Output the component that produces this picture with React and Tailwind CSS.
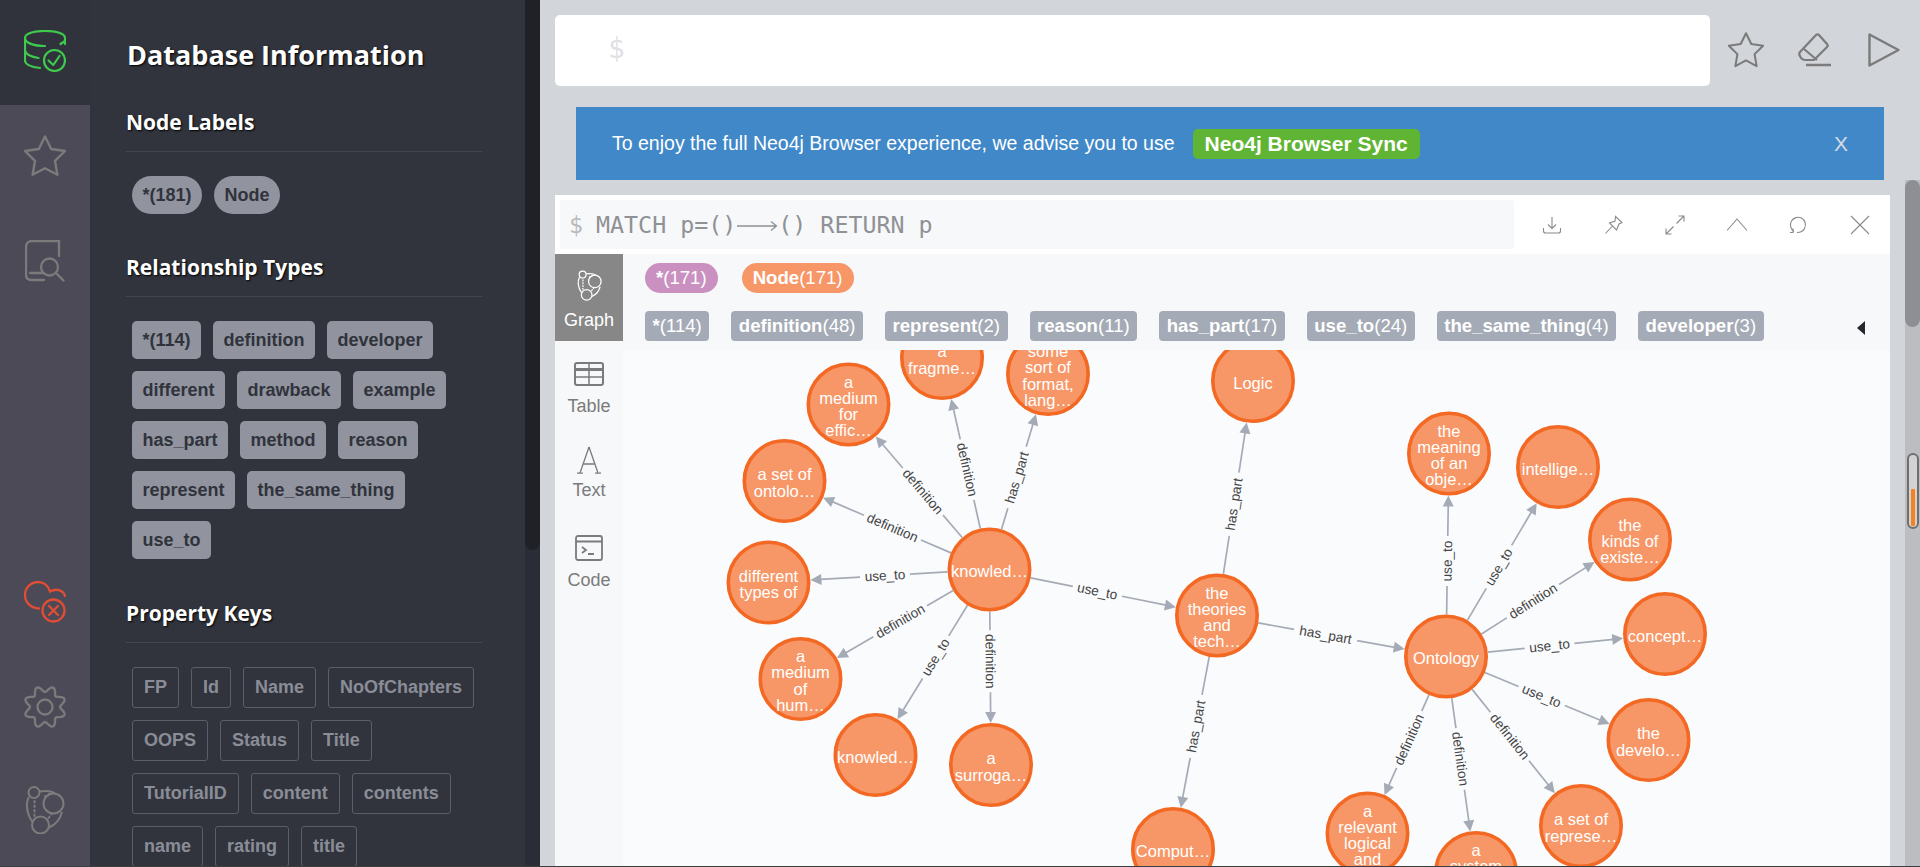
import React from 'react';

const sans = 'font-["Liberation_Sans",Arial,sans-serif]';

const nodes = {
  fragme: { x: 942, y: 358, t: ['a', 'fragme…'] },
  some: { x: 1048, y: 374, t: ['some', 'sort of', 'format,', 'lang…'] },
  medium: { x: 848.5, y: 404.5, t: ['a', 'medium', 'for', 'effic…'] },
  set: { x: 784.5, y: 481, t: ['a set of', 'ontolo…'] },
  different: { x: 768.5, y: 582.5, t: ['different', 'types of'] },
  knowledge: { x: 989.5, y: 569.5, t: ['knowled…'] },
  human: { x: 800.5, y: 679, t: ['a', 'medium', 'of', 'hum…'] },
  knowledge2: { x: 875.5, y: 755, t: ['knowled…'] },
  surrogate: { x: 991, y: 765, t: ['a', 'surroga…'] },
  theories: { x: 1217, y: 615.5, t: ['the', 'theories', 'and', 'tech…'] },
  logic: { x: 1253, y: 381, t: ['Logic'] },
  comput: { x: 1173, y: 849, t: ['Comput…'] },
  ontology: { x: 1446, y: 656.5, t: ['Ontology'] },
  meaning: { x: 1449, y: 453.5, t: ['the', 'meaning', 'of an', 'obje…'] },
  intelligence: { x: 1558, y: 467, t: ['intellige…'] },
  kinds: { x: 1630, y: 539.5, t: ['the', 'kinds of', 'existe…'] },
  concept: { x: 1665, y: 634, t: ['concept…'] },
  develop: { x: 1648.5, y: 740, t: ['the', 'develo…'] },
  represent: { x: 1581, y: 826, t: ['a set of', 'represe…'] },
  system: { x: 1476, y: 873, t: ['a', 'system', 'of', 'repr…'] },
  relevant: { x: 1367.5, y: 833.5, t: ['a', 'relevant', 'logical', 'and'] },
};

const edges = [
  ['knowledge', 'fragme', 'definition'],
  ['knowledge', 'some', 'has_part'],
  ['knowledge', 'medium', 'definition'],
  ['knowledge', 'set', 'definition'],
  ['knowledge', 'different', 'use_to'],
  ['knowledge', 'human', 'definition'],
  ['knowledge', 'knowledge2', 'use_to'],
  ['knowledge', 'surrogate', 'definition'],
  ['knowledge', 'theories', 'use_to'],
  ['theories', 'logic', 'has_part'],
  ['theories', 'comput', 'has_part'],
  ['theories', 'ontology', 'has_part'],
  ['ontology', 'meaning', 'use_to'],
  ['ontology', 'intelligence', 'use_to'],
  ['ontology', 'kinds', 'definition'],
  ['ontology', 'concept', 'use_to'],
  ['ontology', 'develop', 'use_to'],
  ['ontology', 'represent', 'definition'],
  ['ontology', 'system', 'definition'],
  ['ontology', 'relevant', 'definition'],
];

const labelWidth = { definition: 62, use_to: 50, has_part: 64 };

const Edge = ({ from, to, label }) => {
  const a = nodes[from];
  const b = nodes[to];
  const dx = b.x - a.x;
  const dy = b.y - a.y;
  const len = Math.hypot(dx, dy);
  const ux = dx / len;
  const uy = dy / len;
  const p = (d) => [a.x + ux * d, a.y + uy * d];
  const inner = len - 84;
  // label sits in the middle of the shaft, the arrow head is not counted
  const mid = 42 + inner / 2 - 6;
  const gap = labelWidth[label] / 2;
  const [x1, y1] = p(42);
  const [x2, y2] = p(mid - gap);
  const [x3, y3] = p(mid + gap);
  const [x4, y4] = p(len - 52);
  const [tx, ty] = p(len - 42);
  const [bx, by] = p(len - 53);
  const nx = -uy * 5.5;
  const ny = ux * 5.5;
  let angle = (Math.atan2(dy, dx) * 180) / Math.PI;
  if (angle > 90.5 || angle < -90.5) angle += 180;
  const [mx, my] = p(mid);
  return (
    <g>
      <line x1={x1} y1={y1} x2={x2} y2={y2} stroke="#a5abb6" strokeWidth="1.7" />
      <line x1={x3} y1={y3} x2={x4} y2={y4} stroke="#a5abb6" strokeWidth="1.7" />
      <polygon points={`${tx},${ty} ${bx + nx},${by + ny} ${bx - nx},${by - ny}`} fill="#a5abb6" />
      <text
        transform={`translate(${mx} ${my}) rotate(${angle})`}
        y="4.5"
        textAnchor="middle"
        fontSize="13.6"
        fill="#444444"
        fontFamily="Liberation Sans, Arial, sans-serif"
      >
        {label}
      </text>
    </g>
  );
};

const Node = ({ x, y, t }) => (
  <g>
    <circle cx={x} cy={y} r="40.2" fill="#f79767" stroke="#f36924" strokeWidth="3.6" />
    <text textAnchor="middle" fontSize="16.5" fill="#ffffff" fontFamily="Liberation Sans, Arial, sans-serif">
      {t.map((line, i) => (
        <tspan key={i} x={x} y={y + (i - (t.length - 1) / 2) * 16.3 + 7.5}>
          {line}
        </tspan>
      ))}
    </text>
  </g>
);

const NeoLogo = ({ className, stroke = '#7c7c7c', sw = 2 }) => (
  <svg viewBox="0 0 40 48" fill="none" stroke={stroke} strokeWidth={sw} className={className}>
    <circle cx="9" cy="6.5" r="5.5" />
    <circle cx="28.5" cy="17.5" r="10" />
    <circle cx="15.5" cy="39" r="8.5" />
    <path d="M14.5 5.5C21 4.5 27 5 30 7.5" />
    <path d="M4 11C1 16 0.5 26 7.5 36" />
    <path d="M24 41.5C30 39 35 33.5 37 26" />
    <path d="M9.5 15V31M20 10.5L25 7.5M23.5 32L26.5 28" strokeDasharray="1.5 3" strokeLinecap="round" />
  </svg>
);

const StarIcon = ({ className }) => (
  <svg viewBox="0 0 42 42" fill="none" stroke="#7b7b7b" strokeWidth="2.4" strokeLinejoin="round" className={className}>
    <path d="M21 1.5L27.2 14L41 16L31 25.8L33.4 39.8L21 33.2L8.6 39.8L11 25.8L1 16L14.8 14Z" />
  </svg>
);

// wavy cog outline, 8 lobes
const gearPath = (() => {
  const pts = [];
  for (let i = 0; i < 144; i++) {
    const th = (i / 144) * Math.PI * 2;
    const r = 18 + 3 * Math.cos(8 * th + Math.PI);
    pts.push(`${(21 + r * Math.cos(th)).toFixed(2)} ${(21 + r * Math.sin(th)).toFixed(2)}`);
  }
  return `M${pts.join('L')}Z`;
})();

const NavItem = ({ active, children }) => (
  <div className={`h-[105px] flex items-center justify-center pb-1 ${active ? 'bg-[#30333c]' : ''}`}>{children}</div>
);

const Nav = () => (
  <div className="w-[90px] h-full shrink-0 bg-[#4d4a57] flex flex-col justify-between">
    <div>
      <NavItem active>
        <svg viewBox="0 0 42 42" fill="none" stroke="#3ecb4c" strokeWidth="2.2" strokeLinecap="round" strokeLinejoin="round" className="w-[42px] h-[42px]">
          <path d="M21 16C10 16 1 13 1 8C1 3.500 10 1 21 1C32 1 41 3.500 41 8V14" />
          <path d="M36.500 14L41 11" />
          <path d="M1 8V30.500C1 34.500 7 37 16 38" />
          <path d="M1 21C2.500 25 7 27 14.500 28" />
          <circle cx="30.500" cy="30.500" r="10.500" />
          <path d="M24.500 30.500L29.300 35L35.500 26" />
        </svg>
      </NavItem>
      <NavItem>
        <StarIcon className="w-[42px] h-[42px]" />
      </NavItem>
      <NavItem>
        <svg viewBox="0 0 40 42" fill="none" stroke="#7b7b7b" strokeWidth="2.3" strokeLinecap="round" className="w-[40px] h-[42px]">
          <path d="M34 16V1H7C3.500 1 1 3.500 1 7V35C1 38.500 3.500 40 7 40H19" />
          <path d="M5 33H19" />
          <circle cx="24.500" cy="27" r="8.500" />
          <path d="M31 33L38.500 40.500" />
        </svg>
      </NavItem>
    </div>
    <div>
      <NavItem>
        <svg viewBox="0 0 42 42" fill="none" stroke="#e24d33" strokeWidth="2.3" strokeLinecap="round" className="w-[42px] h-[42px]">
          <path d="M15 27.500C7.500 27 1 22 1 14C1 7 6.500 1 14 1C20 1 24.500 5 26 10.500C32 7 39 9 41 15" />
          <circle cx="29.500" cy="29.500" r="11" />
          <path d="M25 25L34 34M34 25L25 34" />
        </svg>
      </NavItem>
      <NavItem>
        <svg viewBox="0 0 42 42" fill="none" stroke="#7b7b7b" strokeWidth="2.3" className="w-[42px] h-[42px]">
          <path d={gearPath} strokeLinejoin="round" />
          <circle cx="21" cy="21" r="7.500" />
        </svg>
      </NavItem>
      <NavItem>
        <NeoLogo className="w-[40px] h-[48px] -mt-1" />
      </NavItem>
    </div>
  </div>
);

const Section = ({ title, children, className }) => (
  <div className={className}>
    <h4 className={'font-["Open_Sans",sans-serif] font-bold text-[21px] leading-[28px] text-white [text-shadow:1px_1px_2px_#000]'}>
      {title}
    </h4>
    <div className="h-px bg-[#43464f] mt-[15px]" />
    {children}
  </div>
);

const filled = 'h-[38px] bg-[#91949e] text-[#30333c] font-bold text-[18px] px-[10.5px] flex items-center';

const Drawer = () => (
  <div className="w-[450px] h-full shrink-0 bg-[#31343c] flex overflow-hidden">
    <div className={`w-[435px] shrink-0 pl-[36px] pr-[43px] ${sans}`}>
      <h3 className={'font-["Open_Sans",sans-serif] font-bold text-[27px] leading-[36px] text-white [text-shadow:1px_1px_2px_#000] pt-[37px] pl-[1px] box-content whitespace-nowrap'}>
        Database Information
      </h3>
      <Section title="Node Labels" className="mt-[35px]">
        <div className="flex gap-x-[12px] pl-[6px] mt-[24px]">
          <span className={`${filled} rounded-full`}>*(181)</span>
          <span className={`${filled} rounded-full`}>Node</span>
        </div>
      </Section>
      <Section title="Relationship Types" className="mt-[39px]">
        <div className="flex flex-wrap gap-x-[12px] gap-y-[12px] pl-[6px] mt-[24px]">
          {['*(114)', 'definition', 'developer', 'different', 'drawback', 'example', 'has_part', 'method', 'reason', 'represent', 'the_same_thing', 'use_to'].map((s) => (
            <span key={s} className={`${filled} rounded-[5px]`}>{s}</span>
          ))}
        </div>
      </Section>
      <Section title="Property Keys" className="mt-[40px]">
        <div className="flex flex-wrap gap-x-[12px] gap-y-[12px] pl-[6px] mt-[24px]">
          {['FP', 'Id', 'Name', 'NoOfChapters', 'OOPS', 'Status', 'Title', 'TutorialID', 'content', 'contents', 'name', 'rating', 'title'].map((s) => (
            <span key={s} className="h-[41px] border border-[#5b5e68] rounded-[3px] text-[#8a8d98] font-bold text-[18px] px-[11px] flex items-center">{s}</span>
          ))}
        </div>
      </Section>
    </div>
    <div className="w-[15px] h-full bg-[#2a2d35]">
      <div className="h-[550px] bg-[#1f2126] rounded-b-[8px]" />
    </div>
  </div>
);

const ActionIcon = ({ children }) => (
  <svg viewBox="0 0 20 20" fill="none" stroke="#8a8a8a" strokeWidth="1.1" className="w-5 h-5">{children}</svg>
);

const Frame = () => (
  <div className="mt-[15px] mx-[15px] mr-[15px] w-[1335px] flex-1 min-h-0 flex flex-col bg-white">
    <div className="h-[59px] shrink-0 flex items-center pl-[5px]">
      <div className="w-[954px] h-[49px] bg-[#f7f8fa] rounded-[2px] flex items-center pl-[9px] pt-[2px] font-['DejaVu_Sans_Mono',monospace] text-[23.3px] text-[#8f9195] whitespace-pre">
        <span className="text-[#b8babe] mr-[13px]">$</span>
        <span>MATCH p=()</span>
        <svg viewBox="0 0 42 12" fill="none" stroke="#8f9195" strokeWidth="1.3" className="w-[42px] h-[12px]">
          <path d="M1 6H40M35 1.500L40.500 6L35 10.500" />
        </svg>
        <span>() RETURN p</span>
      </div>
      <div className="flex-1 flex justify-between items-center pl-[28px] pr-[20px]">
        <ActionIcon>
          <path d="M10 2V13M6 9.500L10 13.500L14 9.500M1.500 13V16C1.500 17.500 2.500 18 3.500 18H16.500C17.500 18 18.500 17.500 18.500 16V13" />
        </ActionIcon>
        <ActionIcon>
          <path d="M11.500 1.500L18 7.500L15 9L12.500 15L5.500 8L11 6ZM8 11.500L1.500 18.500" />
        </ActionIcon>
        <ActionIcon>
          <path d="M11.500 8.500L19 1M13.500 1H19V6.500M8.500 11.500L1 19M1 13.500V19H6.500" />
        </ActionIcon>
        <ActionIcon>
          <path d="M0 15.500L10 4L20 15.500" />
        </ActionIcon>
        <ActionIcon>
          <path d="M6 16.500C2.500 14 1.500 9.500 3.500 6C5.500 2.500 10 1.500 13.500 3C17 5 18.500 9.500 16.500 13.500C15 16.500 12 17.500 9 17.500M5 13.500V17.500H2" />
        </ActionIcon>
        <ActionIcon>
          <path d="M1 1L19 19M19 1L1 19" />
        </ActionIcon>
      </div>
    </div>
    <div className="flex-1 min-h-0 flex bg-[#f7f8fa]">
      <div className={`w-[68px] shrink-0 ${sans} text-[18px] text-[#7b7b7b] text-center`}>
        <div className="h-[87px] bg-[#878787] text-white flex flex-col items-center pt-[16px]">
          <NeoLogo className="w-[25px] h-[31px]" stroke="#ffffff" sw="2" />
          <span className="leading-[20px] mt-[9px]">Graph</span>
        </div>
        <div className="flex flex-col items-center pt-[21px]">
          <svg viewBox="0 0 30 24" fill="none" stroke="#7b7b7b" className="w-[30px] h-[24px]">
            <rect x="1" y="1" width="28" height="22" rx="2" strokeWidth="2" />
            <path d="M1 7.500H29" strokeWidth="3" />
            <path d="M1 15H29M15 1V23" strokeWidth="1.500" />
          </svg>
          <span className="leading-[20px] mt-[10px]">Table</span>
          <svg viewBox="0 0 26 28" fill="none" stroke="#7b7b7b" strokeWidth="1.300" className="w-[26px] h-[28px] mt-[30px]">
            <path d="M13 1L4 27M13 1L22 27M7.500 18H18.500M1 27.200H7M19 27.200H25" />
          </svg>
          <span className="leading-[20px] mt-[6px]">Text</span>
          <svg viewBox="0 0 28 26" fill="none" stroke="#7b7b7b" strokeWidth="1.800" className="w-[28px] h-[26px] mt-[35px]">
            <rect x="1" y="1" width="26" height="24" rx="2" />
            <path d="M1 6.500H27M7 12L11 15L7 18M13 19H19" />
          </svg>
          <span className="leading-[20px] mt-[9px]">Code</span>
        </div>
      </div>
      <div className="flex-1 min-w-0 flex flex-col">
        <div className={`h-[96px] shrink-0 pl-[22px] pt-[9px] ${sans} text-[18.6px] text-white relative`}>
          <div className="flex gap-x-[24px]">
            <span className="h-[30px] rounded-full bg-[#c990c0] px-[11px] flex items-center font-bold">*<span className="font-normal">(171)</span></span>
            <span className="h-[30px] rounded-full bg-[#f79767] px-[11px] flex items-center"><span className="font-bold">Node</span>(171)</span>
          </div>
          <div className="flex gap-x-[22px] mt-[18px]">
            {[['*', '(114)'], ['definition', '(48)'], ['represent', '(2)'], ['reason', '(11)'], ['has_part', '(17)'], ['use_to', '(24)'], ['the_same_thing', '(4)'], ['developer', '(3)']].map(([a, b]) => (
              <span key={a} className="h-[30px] rounded-[4px] bg-[#a5abb6] px-[7.500px] flex items-center"><span className="font-bold">{a}</span>{b}</span>
            ))}
          </div>
          <div className="absolute left-[1234px] top-[67px] w-0 h-0 border-y-[7px] border-y-transparent border-r-[8px] border-r-[#24292f]" />
        </div>
        <div className="flex-1 min-h-0 bg-[#fafbfd]">
          <svg viewBox="623 350 1267 516" className="block w-full h-full">
            {edges.map(([from, to, label]) => (
              <Edge key={from + to} from={from} to={to} label={label} />
            ))}
            {Object.entries(nodes).map(([k, n]) => (
              <Node key={k} {...n} />
            ))}
          </svg>
        </div>
      </div>
    </div>
  </div>
);

const MainScrollbar = () => (
  <div className="absolute right-0 top-[180px] bottom-0 w-[15px] bg-[#bcbdc1]">
    <div className="h-[147px] bg-[#8e8f94] rounded-[8px]" />
    <div className="absolute left-[2px] top-[273px] w-[12px] h-[76px] rounded-full border-2 border-[#6f6f6f] bg-[#d2d2d2] flex justify-center items-end pb-[1px]">
      <div className="w-[4px] h-[37px] bg-[#f5821f] rounded-[1px]" />
    </div>
  </div>
);

const Main = () => (
  <div className="flex-1 min-w-0 h-full bg-[#d2d5da] relative flex flex-col">
    <div className="h-[71px] mt-[15px] shrink-0 flex items-center">
      <div className="w-[1155px] h-[71px] ml-[15px] bg-white rounded-[5px] flex items-center pl-[53px] pb-[3px] font-['DejaVu_Sans_Mono',monospace] text-[28px] text-[#dfe1e5]">$</div>
      <div className="flex items-center ml-[18px] mt-[-1px]">
        <StarIcon className="w-[36px] h-[36px]" />
        <svg viewBox="0 0 34 34" fill="none" stroke="#7b7b7b" strokeWidth="2.2" strokeLinejoin="round" className="w-[34px] h-[34px] ml-[34px]">
          <path d="M18 2Q19.500 0.500 21 2L29 11Q30.500 12.500 29 14L16 27H7Q5 27 3 25L2 23Q0.500 21 2 19Z" />
          <path d="M6 16L19 27" />
          <path d="M8 32H33" strokeWidth="2.500" />
        </svg>
        <svg viewBox="0 0 32 34" fill="none" stroke="#7b7b7b" strokeWidth="2.400" strokeLinejoin="round" className="w-[32px] h-[34px] ml-[36px]">
          <path d="M1.500 1.500V32.500L30.500 17Z" />
        </svg>
      </div>
    </div>
    <div className={`ml-[36px] mt-[21px] w-[1308px] h-[73px] shrink-0 bg-[#4188c9] flex items-center pl-[36px] pr-[36px] ${sans} text-white text-[19.500px]`}>
      <span>To enjoy the full Neo4j Browser experience, we advise you to use</span>
      <span className="ml-[18px] h-[30px] px-[12px] rounded-[5px] bg-[#5fb434] font-bold text-[21px] flex items-center">Neo4j Browser Sync</span>
      <span className="ml-auto text-[21px] text-[#d4dbe4]">X</span>
    </div>
    <Frame />
    <MainScrollbar />
  </div>
);

const App = () => (
  <div className="w-full h-[867px] overflow-hidden flex flex-col">
    <div className="flex-1 min-h-0 flex">
      <Nav />
      <Drawer />
      <Main />
    </div>
    <div className="h-px shrink-0 bg-[#3e3e42]" />
  </div>
);

export default App;
